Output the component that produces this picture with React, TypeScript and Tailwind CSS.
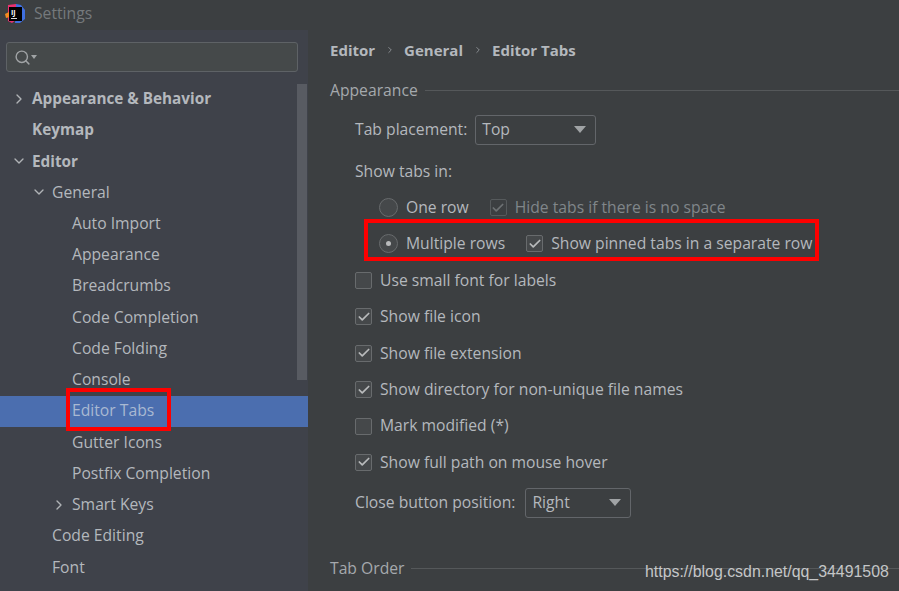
import { Search, ChevronRight, ChevronDown, Check } from "lucide-react";

const font = "[font-family:'Open_Sans','Noto_Sans',sans-serif]";

type Row = { label: string; indent: number; arrow?: "right" | "down"; bold?: boolean; selected?: boolean };

const TREE: Row[] = [
  { label: "Appearance & Behavior", indent: 32, arrow: "right", bold: true },
  { label: "Keymap", indent: 32, bold: true },
  { label: "Editor", indent: 32, arrow: "down", bold: true },
  { label: "General", indent: 52, arrow: "down" },
  { label: "Auto Import", indent: 72 },
  { label: "Appearance", indent: 72 },
  { label: "Breadcrumbs", indent: 72 },
  { label: "Code Completion", indent: 72 },
  { label: "Code Folding", indent: 72 },
  { label: "Console", indent: 72 },
  { label: "Editor Tabs", indent: 72, selected: true },
  { label: "Gutter Icons", indent: 72 },
  { label: "Postfix Completion", indent: 72 },
  { label: "Smart Keys", indent: 72, arrow: "right" },
  { label: "Code Editing", indent: 52 },
  { label: "Font", indent: 52 },
];

function TreeRow({ row }: { row: Row }) {
  return (
    <div
      className={`relative flex h-[31.25px] shrink-0 items-center ${
        row.selected ? "bg-[#4b6eaf] text-[#a9b9d2]" : "text-[#b4b8bd]"
      } ${row.bold ? "text-[15.3px] font-bold" : "text-[15.7px]"}`}
      style={{ paddingLeft: row.indent }}
    >
      {row.arrow === "right" && (
        <ChevronRight className="absolute text-[#b0b3b6]" size={16} style={{ left: row.indent - 21 }} />
      )}
      {row.arrow === "down" && (
        <ChevronDown className="absolute text-[#b0b3b6]" size={16} style={{ left: row.indent - 21 }} />
      )}
      {row.label}
      {row.selected && (
        <div className="absolute left-[66px] top-[-8px] h-[43px] w-[105px] border-4 border-[#fe0000]" />
      )}
    </div>
  );
}

function CheckBox({ checked, dim, label }: { checked?: boolean; dim?: boolean; label: string }) {
  return (
    <div className={`flex items-center gap-[8px] text-[15.7px] ${dim ? "text-[#80868a]" : "text-[#b4b8bd]"}`}>
      <div
        className={`flex h-[17px] w-[17px] items-center justify-center rounded-[2px] border ${
          dim ? "border-[#565a5c]" : "border-[#686b6d] bg-[#45484a]"
        }`}
      >
        {checked && <Check size={14} strokeWidth={3} className={dim ? "text-[#6d7173]" : "text-[#b8babb]"} />}
      </div>
      {label}
    </div>
  );
}

function Radio({ on, label }: { on?: boolean; label: string }) {
  return (
    <div className="flex items-center gap-[8px] text-[15.7px] text-[#b4b8bd]">
      <div className="flex h-[19px] w-[19px] items-center justify-center rounded-full border border-[#686b6d] bg-[#45484a]">
        {on && <div className="h-[5px] w-[5px] rounded-full bg-[#b8babb]" />}
      </div>
      {label}
    </div>
  );
}

function Combo({ value, w }: { value: string; w: string }) {
  return (
    <div className={`flex h-[30px] items-center justify-between rounded-[3px] border border-[#63666a] pl-[6px] pr-[9px] text-[15.7px] text-[#b4b8bd] ${w}`}>
      {value}
      <div className="h-0 w-0 border-x-[6px] border-t-[7px] border-x-transparent border-t-[#a0a3a5]" />
    </div>
  );
}

function Section({ title, w }: { title: string; w: string }) {
  return (
    <div className="flex shrink-0 items-center gap-[8px] text-[15.7px] text-[#a5a9ad]">
      <span className={`whitespace-nowrap ${w}`}>{title}</span>
      <div className="h-[1px] flex-1 bg-[#55585a]" />
    </div>
  );
}

export default function App() {
  return (
    <div className={`relative flex h-[591px] w-[899px] flex-col overflow-hidden bg-[#3c3f41] ${font}`}>
      {/* title bar */}
      <div className="flex h-[30px] shrink-0 items-center bg-[#3c3f41] pb-[3px] pl-[5px]">
        <svg width="21" height="20" viewBox="0 0 21 20">
          <path d="M3 1 L11 0 L11 16 L7 19 L3 17Z" fill="#e8326f" />
          <path d="M11 0 L16 1 L20 6 L20 15 L15 19 L10 19 L11 9Z" fill="#3f6fe0" />
          <path d="M0 10 L4 8 L5 13 L1 14Z" fill="#f58a1f" />
          <rect x="4" y="3" width="13" height="14" fill="#000" />
          <rect x="6" y="14" width="6" height="1" fill="#d8d8d8" />
          <text x="6" y="11" fontSize="7" fontWeight="700" fill="#fff">IJ</text>
        </svg>
        <span className="ml-[8px] text-[15.7px] text-[#75797c]">Settings</span>
      </div>

      <div className="flex min-h-0 flex-1">
        {/* sidebar */}
        <div className="relative flex w-[308px] shrink-0 flex-col bg-[#3f424a]">
          <div className="px-[6px] pb-[11px] pt-[12px]">
            <div className="flex h-[30px] w-[292px] items-center rounded-[3px] border border-[#5e6266] bg-[#45494a] pl-[7px] text-[#a0a3a5]">
              <Search size={17} />
              <div className="h-0 w-0 border-x-[3px] border-t-[4px] border-x-transparent border-t-[#a0a3a5]" />
            </div>
          </div>
          {TREE.map((r) => (
            <TreeRow key={r.label} row={r} />
          ))}
          <div className="absolute left-[297px] top-[54px] h-[296px] w-[10px] bg-[#585b62]" />
        </div>

        {/* content */}
        <div className="flex min-w-0 flex-1 flex-col pl-[22px]">
          <div className="flex h-[40px] shrink-0 items-center text-[15px] font-bold text-[#b4b8bd]">
            Editor
            <ChevronRight size={10} strokeWidth={1.5} className="mx-[9.5px]" />
            General
            <ChevronRight size={10} strokeWidth={1.5} className="mx-[9.5px]" />
            Editor Tabs
          </div>

          <div className="h-[9px] shrink-0" />
          <Section title="Appearance" w="w-[87px]" />

          <div className="flex shrink-0 flex-col pl-[25px] pt-[3px]">
            <div className="mt-[9px] flex items-center gap-[8px] text-[15.7px] text-[#b4b8bd]">
              Tab placement:
              <Combo value="Top" w="w-[121px]" />
            </div>
            <div className="mt-[15px] h-[22px] text-[15.7px] leading-[22px] text-[#b4b8bd]">Show tabs in:</div>

            <div className="mt-[14px] flex h-[24px] items-center pl-[24px]">
              <Radio label="One row" />
              <div className="ml-[21px]">
                <CheckBox checked dim label="Hide tabs if there is no space" />
              </div>
            </div>
            <div className="relative mt-[12px] flex h-[24px] items-center pl-[24px]">
              <Radio on label="Multiple rows" />
              <div className="ml-[21px]">
                <CheckBox checked label="Show pinned tabs in a separate row" />
              </div>
              <div className="absolute left-[9px] top-[-13px] h-[42px] w-[455px] border-4 border-[#fe0000]" />
            </div>

            <div className="mt-[13px] flex flex-col gap-[12.4px]">
              {[
                { l: "Use small font for labels", c: false },
                { l: "Show file icon", c: true },
                { l: "Show file extension", c: true },
                { l: "Show directory for non-unique file names", c: true },
                { l: "Mark modified (*)", c: false },
                { l: "Show full path on mouse hover", c: true },
              ].map((x) => (
                <div key={x.l} className="h-[24px] content-center">
                  <CheckBox checked={x.c} label={x.l} />
                </div>
              ))}
            </div>

            <div className="mt-[13px] flex items-center gap-[10px] text-[15.7px] text-[#b4b8bd]">
              Close button position:
              <Combo value="Right" w="w-[106px]" />
            </div>
          </div>

          <div className="mt-[39px] shrink-0">
            <Section title="Tab Order" w="w-[73px]" />
          </div>
        </div>
      </div>

      {/* watermark */}
      <div className="absolute left-[645px] top-[560px] text-[15.9px] text-[#c4c6c7] [font-family:'Liberation_Sans',sans-serif]">
        https://blog.csdn.net/qq_34491508
      </div>
    </div>
  );
}
